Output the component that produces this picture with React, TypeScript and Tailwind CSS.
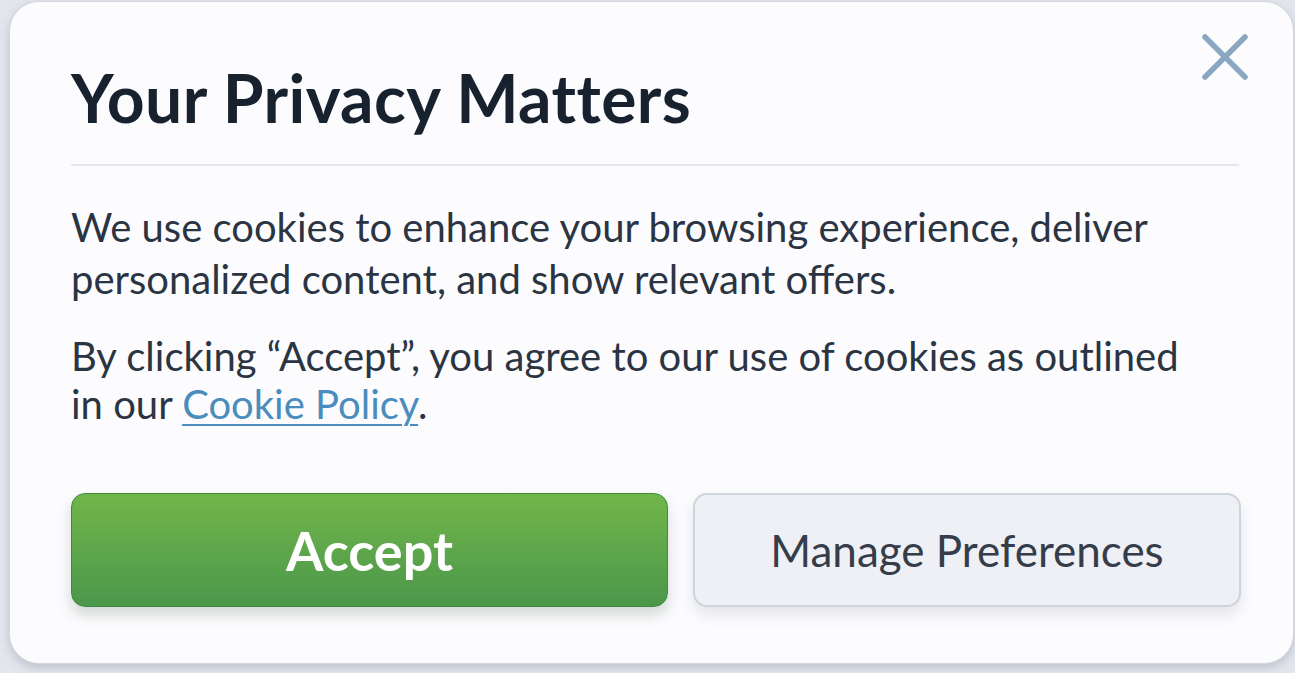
export default function App() {
  return (
    <div className="w-[1295px] h-[673px] bg-[#e3e6ec] overflow-hidden font-['Lato',sans-serif]">
      <div className="relative ml-[9px] mt-[1px] w-[1285px] h-[663px] bg-[#fcfcfe] rounded-[30px] border border-[#d3d7df] shadow-[0_4px_10px_rgba(120,130,150,0.35)] pl-[61px] pr-[52px] pt-[58px]">
        {/* close */}
        <button className="absolute right-[44px] top-[31px]">
          <svg width="48" height="48" viewBox="0 0 48 48" fill="none" stroke="#8ba6c0" strokeWidth="5.5" strokeLinecap="round">
            <path d="M4 4 L44 44 M44 4 L4 44" />
          </svg>
        </button>

        <h1 className="text-[66px] leading-[76px] font-bold text-[#18222f] tracking-[0.4px]">
          Your Privacy Matters
        </h1>

        <div className="mt-[28px] h-[2px] bg-[#e4e7ec] w-[1168px]"></div>

        <p className="mt-[35px] text-[40px] leading-[52px] text-[#2b3442] w-[1140px]">
          We use cookies to enhance your browsing experience, deliver personalized content, and show relevant offers.
        </p>

        <p className="mt-[27px] text-[40px] leading-[48px] text-[#2b3442] w-[1140px]">
          <span>By clicking “Accept”, you agree to our use of cookies as outlined</span>{' '}
          <span>in our</span>{' '}
          <a href="#" className="text-[#4a8dbd] underline underline-offset-[5px] decoration-2">
            Cookie Policy
          </a>
          .
        </p>

        <div className="mt-[65px] flex gap-[25px]">
          <button className="shrink-0 w-[597px] h-[114px] rounded-[14px] bg-gradient-to-b from-[#71b649] to-[#4b974b] border border-[#3f8a3f] shadow-[0_8px_14px_rgba(90,110,90,0.25)] text-white text-[54px] font-bold">
            Accept
          </button>
          <button className="shrink-0 w-[548px] h-[114px] rounded-[14px] bg-[#eef0f5] border-2 border-[#cfd4dc] shadow-[0_8px_14px_rgba(120,130,150,0.18)] text-[#353d4b] text-[44px]">
            Manage Preferences
          </button>
        </div>
      </div>
    </div>
  );
}
